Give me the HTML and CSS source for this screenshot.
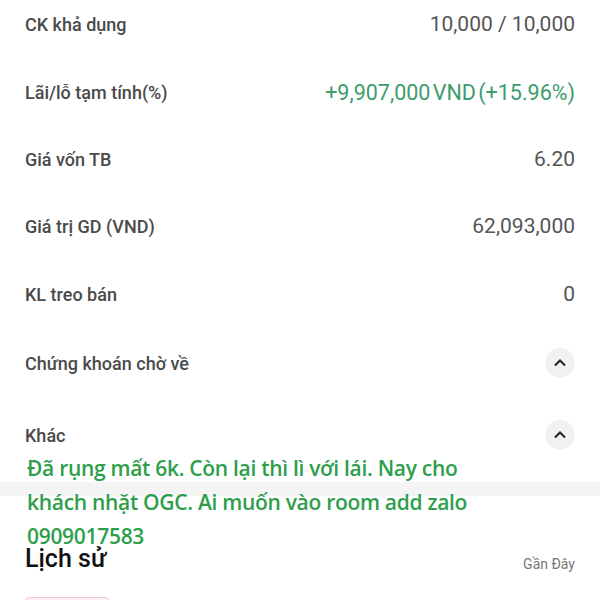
FILE: index.html
```html
<!DOCTYPE html>
<html lang="vi">
<head>
<meta charset="utf-8">
<link rel="stylesheet" href="styles.css">
</head>
<body>
<div class="page">
  <div class="list">
    <div class="row"><span class="label">CK khả dụng</span><span class="value">10,000 / 10,000</span></div>
    <div class="row"><span class="label">Lãi/lỗ tạm tính(%)</span><span class="value green">+9,907,000 VND (+15.96%)</span></div>
    <div class="row"><span class="label">Giá vốn TB</span><span class="value">6.20</span></div>
    <div class="row"><span class="label">Giá trị GD (VND)</span><span class="value">62,093,000</span></div>
    <div class="row"><span class="label">KL treo bán</span><span class="value">0</span></div>
    <div class="row row-collapse"><span class="label">Chứng khoán chờ về</span>
      <span class="chev"><svg width="14" height="10" viewBox="0 0 14 10"><path d="M2 7.5 L7 2.5 L12 7.5" fill="none" stroke="#222" stroke-width="2"/></svg></span></div>
    <div class="row row-collapse row-last"><span class="label">Khác</span>
      <span class="chev"><svg width="14" height="10" viewBox="0 0 14 10"><path d="M2 7.5 L7 2.5 L12 7.5" fill="none" stroke="#222" stroke-width="2"/></svg></span></div>
  </div>
  <div class="divider"></div>
  <div class="history">
    <div class="history-head"><span class="h-title">Lịch sử</span><span class="h-sub">Gần Đây</span></div>
    <div class="tabs"><span class="tab-pill"></span></div>
  </div>
  <div class="caption">Đã rụng mất 6k. Còn lại thì lì với lái. Nay cho khách nhặt OGC. Ai muốn vào room add zalo 0909017583</div>
</div>
</body>
</html>
```
FILE: styles.css
```css
html, body { margin: 0; padding: 0; background: #fff; }
body { font-family: Roboto, "Noto Sans", sans-serif; overflow: hidden; }
.page { position: relative; width: 600px; height: 600px; overflow: hidden; }
.list { margin-top: -10px; padding: 0 25px; }
.row { height: 68px; display: flex; align-items: center; justify-content: space-between; }
.row:nth-child(3) { height: 66px; }
.row-collapse { height: 70px; }
.row-last { height: 74px; }
.label { font-size: 18px; font-weight: 500; color: #4a4a4a; }
.value { font-size: 21px; color: #555; }
.value.green { color: #3d9c6c; font-size: 21.5px; word-spacing: -3px; }
.chev { width: 30px; height: 30px; border-radius: 50%; background: #f1f1f1; display: flex; align-items: center; justify-content: center; }
.divider { height: 14px; background: #f4f4f4; margin-top: 10px; }
.history { padding: 0 25px; }
.history-head { display: flex; justify-content: space-between; align-items: center; height: 56px; margin-top: 40px; }
.h-title { font-size: 25px; font-weight: 500; color: #111; margin-top: -12px; }
.h-sub { font-size: 14px; color: #777; }
.tabs { margin-top: 5px; }
.tab-pill { display: block; width: 82px; height: 30px; border: 1px solid #f2c4cc; background: #fdf1f3; border-radius: 4px; }
.caption { position: absolute; left: 27px; top: 451px; width: 445px; font-family: "Open Sans", sans-serif; font-weight: 600; font-size: 21px; letter-spacing: -0.3px; line-height: 34px; color: #2e9e4b; }
```
